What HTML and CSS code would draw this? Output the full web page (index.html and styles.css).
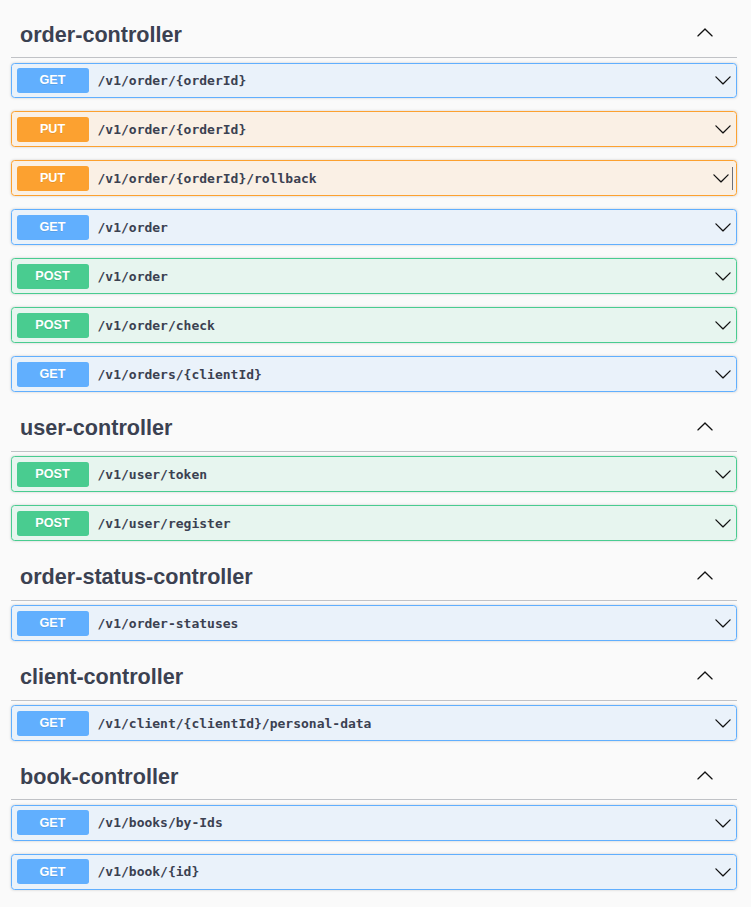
FILE: index.html
```html
<!DOCTYPE html>
<html lang="en">
<head>
<meta charset="utf-8">
<title>API</title>
<link rel="stylesheet" href="styles.css">
</head>
<body>
<div class="page">

<section class="tag-section">
  <h3 class="tag"><span class="tag-name">order-controller</span><svg class="tag-arrow" width="18" height="18" viewBox="0 0 20 20"><path transform="rotate(180 10 10.5)" d="M17.418 6.109c.272-.268.709-.268.979 0s.271.701 0 .969l-7.908 7.83c-.27.268-.707.268-.979 0l-7.908-7.83c-.27-.268-.27-.701 0-.969.271-.268.709-.268.979 0L10 13.25l7.418-7.141z"/></svg></h3>
  <div class="op op-get"><div class="summary"><span class="method">GET</span><span class="path">/v1/order/{orderId}</span><svg class="op-arrow" width="18" height="18" viewBox="0 0 20 20"><path d="M17.418 6.109c.272-.268.709-.268.979 0s.271.701 0 .969l-7.908 7.83c-.27.268-.707.268-.979 0l-7.908-7.83c-.27-.268-.27-.701 0-.969.271-.268.709-.268.979 0L10 13.25l7.418-7.141z"/></svg></div></div>
  <div class="op op-put"><div class="summary"><span class="method">PUT</span><span class="path">/v1/order/{orderId}</span><svg class="op-arrow" width="18" height="18" viewBox="0 0 20 20"><path d="M17.418 6.109c.272-.268.709-.268.979 0s.271.701 0 .969l-7.908 7.83c-.27.268-.707.268-.979 0l-7.908-7.83c-.27-.268-.27-.701 0-.969.271-.268.709-.268.979 0L10 13.25l7.418-7.141z"/></svg></div></div>
  <div class="op op-put"><div class="summary summary-caret"><span class="method">PUT</span><span class="path">/v1/order/{orderId}/rollback</span><svg class="op-arrow" width="18" height="18" viewBox="0 0 20 20"><path d="M17.418 6.109c.272-.268.709-.268.979 0s.271.701 0 .969l-7.908 7.83c-.27.268-.707.268-.979 0l-7.908-7.83c-.27-.268-.27-.701 0-.969.271-.268.709-.268.979 0L10 13.25l7.418-7.141z"/></svg><span class="caret"></span></div></div>
  <div class="op op-get"><div class="summary"><span class="method">GET</span><span class="path">/v1/order</span><svg class="op-arrow" width="18" height="18" viewBox="0 0 20 20"><path d="M17.418 6.109c.272-.268.709-.268.979 0s.271.701 0 .969l-7.908 7.83c-.27.268-.707.268-.979 0l-7.908-7.83c-.27-.268-.27-.701 0-.969.271-.268.709-.268.979 0L10 13.25l7.418-7.141z"/></svg></div></div>
  <div class="op op-post"><div class="summary"><span class="method">POST</span><span class="path">/v1/order</span><svg class="op-arrow" width="18" height="18" viewBox="0 0 20 20"><path d="M17.418 6.109c.272-.268.709-.268.979 0s.271.701 0 .969l-7.908 7.83c-.27.268-.707.268-.979 0l-7.908-7.83c-.27-.268-.27-.701 0-.969.271-.268.709-.268.979 0L10 13.25l7.418-7.141z"/></svg></div></div>
  <div class="op op-post"><div class="summary"><span class="method">POST</span><span class="path">/v1/order/check</span><svg class="op-arrow" width="18" height="18" viewBox="0 0 20 20"><path d="M17.418 6.109c.272-.268.709-.268.979 0s.271.701 0 .969l-7.908 7.83c-.27.268-.707.268-.979 0l-7.908-7.83c-.27-.268-.27-.701 0-.969.271-.268.709-.268.979 0L10 13.25l7.418-7.141z"/></svg></div></div>
  <div class="op op-get"><div class="summary"><span class="method">GET</span><span class="path">/v1/orders/{clientId}</span><svg class="op-arrow" width="18" height="18" viewBox="0 0 20 20"><path d="M17.418 6.109c.272-.268.709-.268.979 0s.271.701 0 .969l-7.908 7.83c-.27.268-.707.268-.979 0l-7.908-7.83c-.27-.268-.27-.701 0-.969.271-.268.709-.268.979 0L10 13.25l7.418-7.141z"/></svg></div></div>
</section>

<section class="tag-section">
  <h3 class="tag"><span class="tag-name">user-controller</span><svg class="tag-arrow" width="18" height="18" viewBox="0 0 20 20"><path transform="rotate(180 10 10.5)" d="M17.418 6.109c.272-.268.709-.268.979 0s.271.701 0 .969l-7.908 7.83c-.27.268-.707.268-.979 0l-7.908-7.83c-.27-.268-.27-.701 0-.969.271-.268.709-.268.979 0L10 13.25l7.418-7.141z"/></svg></h3>
  <div class="op op-post"><div class="summary"><span class="method">POST</span><span class="path">/v1/user/token</span><svg class="op-arrow" width="18" height="18" viewBox="0 0 20 20"><path d="M17.418 6.109c.272-.268.709-.268.979 0s.271.701 0 .969l-7.908 7.83c-.27.268-.707.268-.979 0l-7.908-7.83c-.27-.268-.27-.701 0-.969.271-.268.709-.268.979 0L10 13.25l7.418-7.141z"/></svg></div></div>
  <div class="op op-post"><div class="summary"><span class="method">POST</span><span class="path">/v1/user/register</span><svg class="op-arrow" width="18" height="18" viewBox="0 0 20 20"><path d="M17.418 6.109c.272-.268.709-.268.979 0s.271.701 0 .969l-7.908 7.83c-.27.268-.707.268-.979 0l-7.908-7.83c-.27-.268-.27-.701 0-.969.271-.268.709-.268.979 0L10 13.25l7.418-7.141z"/></svg></div></div>
</section>

<section class="tag-section">
  <h3 class="tag"><span class="tag-name">order-status-controller</span><svg class="tag-arrow" width="18" height="18" viewBox="0 0 20 20"><path transform="rotate(180 10 10.5)" d="M17.418 6.109c.272-.268.709-.268.979 0s.271.701 0 .969l-7.908 7.83c-.27.268-.707.268-.979 0l-7.908-7.83c-.27-.268-.27-.701 0-.969.271-.268.709-.268.979 0L10 13.25l7.418-7.141z"/></svg></h3>
  <div class="op op-get"><div class="summary"><span class="method">GET</span><span class="path">/v1/order-statuses</span><svg class="op-arrow" width="18" height="18" viewBox="0 0 20 20"><path d="M17.418 6.109c.272-.268.709-.268.979 0s.271.701 0 .969l-7.908 7.83c-.27.268-.707.268-.979 0l-7.908-7.83c-.27-.268-.27-.701 0-.969.271-.268.709-.268.979 0L10 13.25l7.418-7.141z"/></svg></div></div>
</section>

<section class="tag-section">
  <h3 class="tag"><span class="tag-name">client-controller</span><svg class="tag-arrow" width="18" height="18" viewBox="0 0 20 20"><path transform="rotate(180 10 10.5)" d="M17.418 6.109c.272-.268.709-.268.979 0s.271.701 0 .969l-7.908 7.83c-.27.268-.707.268-.979 0l-7.908-7.83c-.27-.268-.27-.701 0-.969.271-.268.709-.268.979 0L10 13.25l7.418-7.141z"/></svg></h3>
  <div class="op op-get"><div class="summary"><span class="method">GET</span><span class="path">/v1/client/{clientId}/personal-data</span><svg class="op-arrow" width="18" height="18" viewBox="0 0 20 20"><path d="M17.418 6.109c.272-.268.709-.268.979 0s.271.701 0 .969l-7.908 7.83c-.27.268-.707.268-.979 0l-7.908-7.83c-.27-.268-.27-.701 0-.969.271-.268.709-.268.979 0L10 13.25l7.418-7.141z"/></svg></div></div>
</section>

<section class="tag-section">
  <h3 class="tag"><span class="tag-name">book-controller</span><svg class="tag-arrow" width="18" height="18" viewBox="0 0 20 20"><path transform="rotate(180 10 10.5)" d="M17.418 6.109c.272-.268.709-.268.979 0s.271.701 0 .969l-7.908 7.83c-.27.268-.707.268-.979 0l-7.908-7.83c-.27-.268-.27-.701 0-.969.271-.268.709-.268.979 0L10 13.25l7.418-7.141z"/></svg></h3>
  <div class="op op-get"><div class="summary"><span class="method">GET</span><span class="path">/v1/books/by-Ids</span><svg class="op-arrow" width="18" height="18" viewBox="0 0 20 20"><path d="M17.418 6.109c.272-.268.709-.268.979 0s.271.701 0 .969l-7.908 7.83c-.27.268-.707.268-.979 0l-7.908-7.83c-.27-.268-.27-.701 0-.969.271-.268.709-.268.979 0L10 13.25l7.418-7.141z"/></svg></div></div>
  <div class="op op-get"><div class="summary"><span class="method">GET</span><span class="path">/v1/book/{id}</span><svg class="op-arrow" width="18" height="18" viewBox="0 0 20 20"><path d="M17.418 6.109c.272-.268.709-.268.979 0s.271.701 0 .969l-7.908 7.83c-.27.268-.707.268-.979 0l-7.908-7.83c-.27-.268-.27-.701 0-.969.271-.268.709-.268.979 0L10 13.25l7.418-7.141z"/></svg></div></div>
</section>

</div>
</body>
</html>
```
FILE: styles.css
```css
html, body {
  margin: 0;
  padding: 0;
  background: #fafafa;
}

.page {
  padding: 11.6px 14px 0 11px;
  font-family: "Liberation Sans", Arial, sans-serif;
  color: #3b4151;
}

.tag-section {
  display: flex;
  flex-direction: column;
}

.tag {
  display: flex;
  align-items: center;
  margin: 0 0 4.5px;
  padding: 9px 18px 9px 9px;
  border-bottom: 1px solid rgba(59, 65, 81, 0.3);
  font-size: 21.6px;
  line-height: 27.4px;
  font-weight: bold;
  color: #3b4151;
}

.tag-name {
  flex: 1;
}

.tag-arrow {
  fill: #111;
  margin-right: 5.4px;
  margin-bottom: 4px;
}

.op {
  margin: 0 0 13px;
  border: 1px solid #000;
  border-radius: 3.6px;
  box-shadow: 0 0 2.7px rgba(0, 0, 0, 0.19);
}

.summary {
  display: flex;
  align-items: center;
  padding: 4.5px;
}

.method {
  min-width: 72px;
  padding: 5.4px 0;
  border-radius: 2.7px;
  font-family: "Liberation Sans", Arial, sans-serif;
  font-size: 12.6px;
  line-height: 14.2px;
  font-weight: bold;
  color: #fff;
  text-align: center;
  text-shadow: 0 1px 0 rgba(0, 0, 0, 0.1);
}

.path {
  flex: 1;
  padding: 0 9px;
  font-family: "DejaVu Sans Mono", "Liberation Mono", monospace;
  font-size: 13px;
  font-weight: bold;
  color: #3b4151;
}

.op-arrow {
  fill: #111;
  flex: none;
}

.summary-caret .op-arrow {
  margin-right: 2px;
}

.caret {
  width: 1px;
  height: 23px;
  background: #6b6f7a;
  margin-right: -1px;
}

.op-get {
  border-color: #61affe;
  background: rgba(97, 175, 254, 0.1);
}
.op-get .method { background: #61affe; }

.op-put {
  border-color: #fca130;
  background: rgba(252, 161, 48, 0.1);
}
.op-put .method { background: #fca130; }

.op-post {
  border-color: #49cc90;
  background: rgba(73, 204, 144, 0.1);
}
.op-post .method { background: #49cc90; }
```
